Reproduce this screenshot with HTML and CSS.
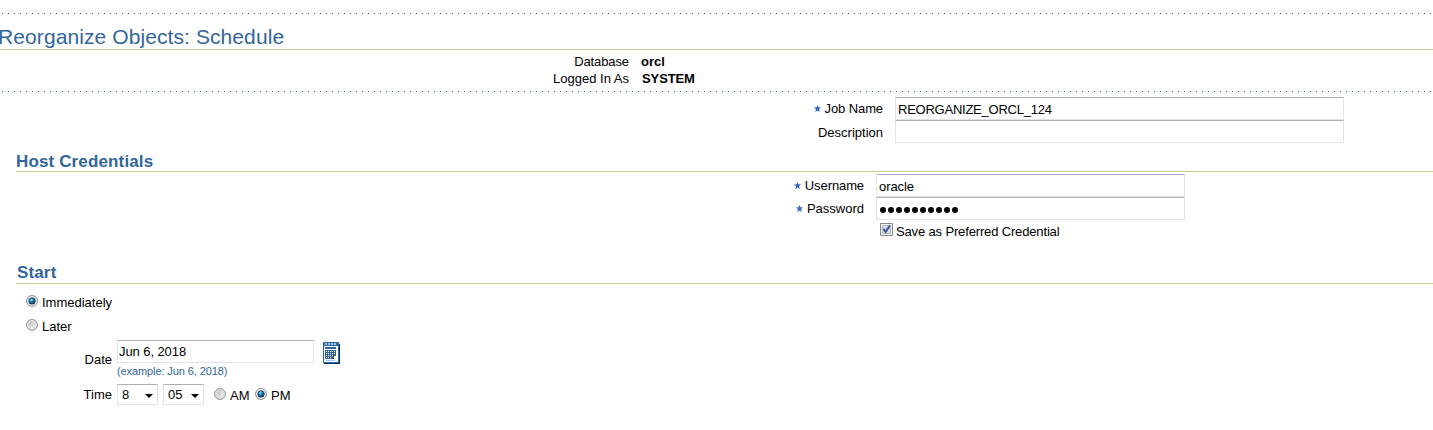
FILE: index.html
```html
<!DOCTYPE html>
<html lang="en">
<head>
<meta charset="utf-8">
<title>Reorganize Objects: Schedule</title>
<link rel="stylesheet" href="styles.css">
</head>
<body>
<svg class="defs" width="0" height="0" aria-hidden="true">
  <defs>
    <radialGradient id="ring" cx=".35" cy=".3" r=".8"><stop offset="0" stop-color="#c3c6ca"/><stop offset="1" stop-color="#f6f6f6"/></radialGradient>
    <radialGradient id="bead" cx=".4" cy=".35" r=".65"><stop offset="0" stop-color="#7fdcf8"/><stop offset=".45" stop-color="#2280ae"/><stop offset="1" stop-color="#082c4a"/></radialGradient>
    <symbol id="radio" viewBox="0 0 12 12">
      <circle cx="6" cy="6" r="5.4" fill="#fafafa" stroke="#868686"/>
      <circle cx="6" cy="6" r="4" fill="url(#ring)" stroke="#cdcdcd" stroke-width=".5"/>
    </symbol>
    <symbol id="radio-on" viewBox="0 0 12 12">
      <circle cx="6" cy="6" r="5.4" fill="#fafafa" stroke="#868686"/>
      <circle cx="6" cy="6" r="4" fill="#d5dce2"/>
      <circle cx="6" cy="6" r="3.3" fill="url(#bead)" stroke="#15344d" stroke-width=".5"/>
    </symbol>
    <symbol id="star" viewBox="0 0 7 7"><path d="M3.5 0 4.4 2.2 7 2.4 5 4.1 5.8 7 3.5 5.4 1.2 7 2 4.1 0 2.4 2.6 2.2Z" fill="#2f66cc"/></symbol>
  </defs>
</svg>
<header class="masthead">
  <h1 class="title">Reorganize Objects: Schedule</h1>
</header>
<dl class="context">
  <dt><span class="t-database">Database</span></dt><dd>orcl</dd>
  <dt>Logged In As</dt><dd><span class="t-system">SYSTEM</span></dd>
</dl>
<section class="job">
  <div class="row"><label class="label"><svg class="star"><use href="#star"/></svg><span class="t-tight">Job Name</span></label><div class="field"><span class="t-reorg">REORGANIZE_ORCL_124</span></div></div>
  <div class="row"><label class="label">Description</label><div class="field"></div></div>
</section>
<section class="credentials">
  <h2 class="heading">Host Credentials</h2>
  <div class="row"><label class="label"><svg class="star"><use href="#star"/></svg><span class="t-tight">Username</span></label><div class="field"><span class="t-oracle">oracle</span></div></div>
  <div class="row"><label class="label"><svg class="star"><use href="#star"/></svg>Password</label><div class="field">
    <span class="dots"><i></i><i></i><i></i><i></i><i></i><i></i><i></i><i></i><i></i><i></i></span></div></div>
  <div class="save">
    <svg class="check" viewBox="0 0 13 13"><path d="M.5.5h12v12H.5Z" fill="#f4f4f4" stroke="#868788"/><path d="M2.5 2.5h8v8h-8Z" fill="#dce0e5" stroke="#b4b9c0"/><path d="M3.4 5.8 5.6 9 9.8 2.6" fill="none" stroke="#3d5795" stroke-width="2"/></svg>
    <span class="t-save">Save as Preferred Credential</span>
  </div>
</section>
<section class="start">
  <h2 class="heading">Start</h2>
  <div class="option"><svg class="radio"><use href="#radio-on"/></svg><span>Immediately</span></div>
  <div class="option"><svg class="radio"><use href="#radio"/></svg><span>Later</span></div>
  <div class="date">
    <label class="when-label">Date</label>
    <div class="date-entry"><div class="field"><span class="t-date">Jun 6, 2018</span></div><div class="hint">(example: Jun 6, 2018)</div></div>
    <svg class="calendar" viewBox="0 0 17 22" shape-rendering="crispEdges">
      <path d="M2 2h15v20H1v-2h1Z" fill="#003366"/>
      <path d="M0 0h16v21H0Z" fill="#336699"/>
      <path d="M1 4h14v16H1Z" fill="#fff"/>
      <path d="M2 1h2v2H2zM5 1h2v2H5zM8 1h2v2H8zM11 1h2v2h-2z" fill="#99ccff"/>
      <path d="M2 5h11v2H2zM2 8h11v6h-2v3H2z" fill="#336699"/>
      <path d="M3 9h1v1H3zM5 9h1v1H5zM7 9h1v1H7zM9 9h1v1H9zM11 9h1v1h-1zM3 11h1v1H3zM5 11h1v1H5zM7 11h1v1H7zM9 11h1v1H9zM11 11h1v1h-1zM3 13h1v1H3zM5 13h1v1H5zM7 13h1v1H7zM9 13h1v1H9zM3 15h1v1H3zM5 15h1v1H5zM7 15h1v1H7z" fill="#fff"/>
      <path d="M3 18h9v1H3z" fill="#99ccff"/><path d="M10 16h1v1h-1z" fill="#000"/>
    </svg>
  </div>
  <div class="time">
    <label class="when-label">Time</label>
    <div class="select"><span>8</span><svg class="arrow" viewBox="0 0 8 4"><path d="M0 0h8L4 4Z"/></svg></div>
    <div class="select"><span>05</span><svg class="arrow" viewBox="0 0 8 4"><path d="M0 0h8L4 4Z"/></svg></div>
    <svg class="radio meridiem"><use href="#radio"/></svg><span class="t-meridiem">AM</span>
    <svg class="radio meridiem"><use href="#radio-on"/></svg><span class="t-meridiem">PM</span>
  </div>
</section>
</body>
</html>
```
FILE: styles.css
```css
* { box-sizing: border-box; }
body { margin: 0; height: 430px; overflow: hidden; background: #fff; color: #000; font: 13px/17px "Liberation Sans", Arial, sans-serif; white-space: nowrap; }
.defs { display: block; }
svg { display: block; flex: none; }
h1, h2, dl, dd { margin: 0; }
.masthead { height: 50px; padding-top: 25px; border-bottom: 1px solid #cccc99; background: repeating-linear-gradient(90deg, transparent 0 2px, #336699 2px 3px, transparent 3px 6px) 0 13px / 100% 1px no-repeat; }
.title { margin-left: -2px; color: #336699; font-size: 21px; font-weight: 400; line-height: 24px; letter-spacing: .09px; }
.context { display: grid; grid-template-columns: 629px 1fr; column-gap: 12px; grid-auto-rows: 17px; height: 42px; padding-top: 3px; background: repeating-linear-gradient(90deg, transparent 0 2px, #336699 2px 3px, transparent 3px 6px) 0 41px / 100% 1px no-repeat; }
.context dt { text-align: right; }
.context dd { font-weight: 700; }
.row { display: flex; height: 23px; }
.label { display: flex; justify-content: flex-end; align-items: center; gap: 4px; height: 23px; }
.star { width: 7px; height: 7px; }
.field { height: 23px; padding: 3px 2px 0; border: 1px solid #e2e3ea; border-top-color: #abadb3; border-radius: 1px; }
.job { height: 60px; padding-top: 5px; }
.job .label { width: 883px; margin-right: 12px; }
.job .row + .row .label { padding-top: 2px; }
.job .field { width: 449px; }
.credentials { height: 111px; }
.heading { height: 20px; margin-left: 16px; border-bottom: 1px solid #cccc99; color: #336699; font-size: 17px; font-weight: 700; line-height: 19px; letter-spacing: .14px; }
.credentials .heading { margin-bottom: 2px; }
.credentials .label { width: 864px; margin-right: 12px; }
.credentials .field { width: 309px; }
.dots { display: flex; gap: 2px; padding: 6px 0 0 1px; }
.dots i { width: 6px; height: 6px; border-radius: 50%; background: #000; }
.save { display: flex; gap: 3px; margin-left: 880px; padding-top: 3px; }
.check { width: 13px; height: 13px; }
.start .heading { height: 21px; margin-bottom: 8px; padding-left: 1px; }
.option { display: flex; gap: 4px; height: 24px; padding: 2px 0 0 26px; }
.option .radio { margin-top: 1px; }
.radio { width: 12px; height: 12px; }
.date { display: flex; height: 44px; }
.date .field { padding: 2px 1px 0; }
.when-label { width: 112px; margin-right: 5px; text-align: right; }
.date .when-label { padding-top: 11px; }
.date-entry { width: 197px; margin-right: 9px; }
.hint { color: #336699; font-size: 11px; line-height: 16px; letter-spacing: -.1px; }
.calendar { width: 17px; height: 22px; margin-top: 2px; }
.time { display: flex; }
.time .when-label { padding-top: 2px; }
.select { display: flex; justify-content: space-between; width: 41px; height: 21px; margin-right: 5px; padding: 1px 4px; border: 1px solid #e2e3ea; border-top-color: #abadb3; }
.arrow { width: 8px; height: 4px; margin-top: 8px; }
.meridiem { margin: 4px 4px 0 5px; }
.t-meridiem { padding-top: 3px; letter-spacing: .2px; }
.t-reorg { letter-spacing: -.24px; }
.t-database, .t-tight { letter-spacing: -.1px; }
.t-system { letter-spacing: -.1px; padding-left: 1px; }
.t-oracle, .t-date { letter-spacing: -.08px; }
.t-save { letter-spacing: -.15px; }
```
